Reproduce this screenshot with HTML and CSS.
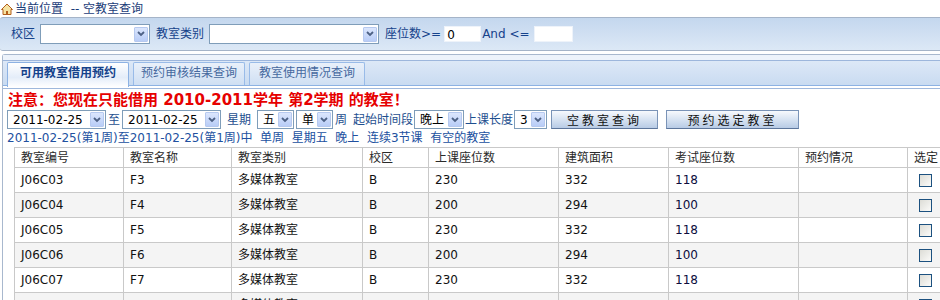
FILE: index.html
```html
<!DOCTYPE html>
<html lang="zh-CN">
<head>
    <meta charset="UTF-8">
    <title>空教室查询</title>
    <link rel="stylesheet" href="styles.css">
</head>
<body>
    <div class="crumb">
        <svg class="home" width="12" height="12" viewBox="0 0 12 12">
            <path d="M6 1 L11.5 6.5 L10 6.5 L10 11.5 L2 11.5 L2 6.5 L0.5 6.5 Z" fill="#f6e3a2" stroke="#b45f1c" stroke-width="1"/>
            <rect x="5" y="8" width="2" height="3.5" fill="#b45f1c"/>
        </svg>
        <span>当前位置&nbsp; -- 空教室查询</span>
    </div>

    <div class="search">
        <span class="lbl">校区</span>
        <span class="sel sel-campus"><span class="val"></span><span class="arr"><svg width="8" height="6" viewBox="0 0 8 6"><polyline points="1,1 4,4 7,1" fill="none" stroke="#4d6185" stroke-width="1.8"/></svg></span></span>
        <span class="lbl">教室类别</span>
        <span class="sel sel-type"><span class="val"></span><span class="arr"><svg width="8" height="6" viewBox="0 0 8 6"><polyline points="1,1 4,4 7,1" fill="none" stroke="#4d6185" stroke-width="1.8"/></svg></span></span>
        <span class="lbl">座位数&gt;=</span>
        <span class="txt txt-min">0</span>
        <span class="lbl lbl-and">And &lt;=</span>
        <span class="txt txt-max"></span>
    </div>

    <div class="tabpanel">
        <div class="tabhead">
            <div class="tabbar">
                <div class="tab tab-on">可用教室借用预约</div>
                <div class="tab">预约审核结果查询</div>
                <div class="tab tab-wide">教室使用情况查询</div>
            </div>
        </div>

        <div class="tabbody">
            <div class="warn">注意：您现在只能借用 2010-2011学年 第2学期 的教室！</div>

            <div class="ctrls">
                <span class="sel sel-date"><span class="val">2011-02-25</span><span class="arr"><svg width="8" height="6" viewBox="0 0 8 6"><polyline points="1,1 4,4 7,1" fill="none" stroke="#4d6185" stroke-width="1.8"/></svg></span></span>
                <span class="lbl">至</span>
                <span class="sel sel-date"><span class="val">2011-02-25</span><span class="arr"><svg width="8" height="6" viewBox="0 0 8 6"><polyline points="1,1 4,4 7,1" fill="none" stroke="#4d6185" stroke-width="1.8"/></svg></span></span>
                <span class="lbl wide">星期</span>
                <span class="sel sel-day wide"><span class="val">五</span><span class="arr"><svg width="8" height="6" viewBox="0 0 8 6"><polyline points="1,1 4,4 7,1" fill="none" stroke="#4d6185" stroke-width="1.8"/></svg></span></span>
                <span class="sel sel-day"><span class="val">单</span><span class="arr"><svg width="8" height="6" viewBox="0 0 8 6"><polyline points="1,1 4,4 7,1" fill="none" stroke="#4d6185" stroke-width="1.8"/></svg></span></span>
                <span class="lbl">周</span>
                <span class="lbl wide">起始时间段</span>
                <span class="sel sel-time tight"><span class="val">晚上</span><span class="arr"><svg width="8" height="6" viewBox="0 0 8 6"><polyline points="1,1 4,4 7,1" fill="none" stroke="#4d6185" stroke-width="1.8"/></svg></span></span>
                <span class="lbl tight">上课长度</span>
                <span class="sel sel-len tight"><span class="val">3</span><span class="arr"><svg width="8" height="6" viewBox="0 0 8 6"><polyline points="1,1 4,4 7,1" fill="none" stroke="#4d6185" stroke-width="1.8"/></svg></span></span>
                <button class="btn btn-query">空教室查询</button>
                <button class="btn btn-book">预约选定教室</button>
            </div>

            <div class="info">2011-02-25(第1周)至2011-02-25(第1周)中&nbsp; 单周&nbsp; 星期五&nbsp; 晚上&nbsp; 连续3节课&nbsp; 有空的教室</div>

            <table class="grid">
                <colgroup>
                    <col class="c1"><col class="c2"><col class="c3"><col class="c4"><col class="c5">
                    <col class="c6"><col class="c7"><col class="c8"><col class="c9">
                </colgroup>
                <tr class="head">
                    <td>教室编号</td><td>教室名称</td><td>教室类别</td><td>校区</td><td>上课座位数</td>
                    <td>建筑面积</td><td>考试座位数</td><td>预约情况</td><td>选定</td>
                </tr>
                <tr>
                    <td>J06C03</td><td>F3</td><td>多媒体教室</td><td>B</td><td>230</td>
                    <td>332</td><td class="num">118</td><td></td><td class="chk"><span class="box"></span></td>
                </tr>
                <tr class="alt">
                    <td>J06C04</td><td>F4</td><td>多媒体教室</td><td>B</td><td>200</td>
                    <td>294</td><td class="num">100</td><td></td><td class="chk"><span class="box"></span></td>
                </tr>
                <tr>
                    <td>J06C05</td><td>F5</td><td>多媒体教室</td><td>B</td><td>230</td>
                    <td>332</td><td class="num">118</td><td></td><td class="chk"><span class="box"></span></td>
                </tr>
                <tr class="alt">
                    <td>J06C06</td><td>F6</td><td>多媒体教室</td><td>B</td><td>200</td>
                    <td>294</td><td class="num">100</td><td></td><td class="chk"><span class="box"></span></td>
                </tr>
                <tr>
                    <td>J06C07</td><td>F7</td><td>多媒体教室</td><td>B</td><td>230</td>
                    <td>332</td><td class="num">118</td><td></td><td class="chk"><span class="box"></span></td>
                </tr>
                <tr class="alt">
                    <td>J06C08</td><td>F8</td><td>多媒体教室</td><td>B</td><td>200</td>
                    <td>294</td><td class="num">100</td><td></td><td class="chk"><span class="box"></span></td>
                </tr>
            </table>
        </div>
    </div>
</body>
</html>
```

FILE: styles.css
```css
html, body {
    margin: 0;
    overflow: hidden;
}
body {
    font-family: "DejaVu Sans", "Noto Sans CJK SC", sans-serif;
    font-size: 12px;
    line-height: 16px;
    color: #15428b;
    background: #fff;
}

/* breadcrumb */
.crumb {
    height: 17px;
    display: flex;
    align-items: center;
    gap: 2px;
    padding-left: 1px;
    color: #1a3c78;
    white-space: nowrap;
    overflow: hidden;
}
.home {
    flex: none;
}

/* search bar */
.search {
    height: 32px;
    display: flex;
    align-items: center;
    padding-left: 11px;
    border-top: 1px solid #a5b4c8;
    border-bottom: 1px solid #a5b4c8;
    border-radius: 3px 0 0 3px;
    background: linear-gradient(#c4d7ee, #dce8f6);
    margin-bottom: 3px;
}
.search .lbl {
    margin: 0 5px 0 6px;
}
.search .lbl:first-child {
    margin-left: 0;
}
.search .lbl-and {
    margin: 0 4px 0 1px;
}
.lbl {
    white-space: nowrap;
}

/* select boxes */
.sel {
    display: flex;
    align-items: center;
    justify-content: space-between;
    height: 19px;
    box-sizing: border-box;
    border: 1px solid #7f9db9;
    background: #fff;
    color: #000;
    padding: 0 1px 0 5px;
    flex: none;
}
.search .sel {
    height: 20px;
}
.sel .arr {
    width: 14px;
    height: 15px;
    box-sizing: border-box;
    border: 1px solid #b6c9ef;
    border-radius: 1px;
    background: linear-gradient(#dbe6fd, #b9cdf7);
    display: flex;
    align-items: center;
    justify-content: center;
}
.sel-campus { width: 110px; }
.sel-type { width: 170px; }
.sel-date { width: 99px; }
.sel-day { width: 37px; }
.sel-time { width: 50px; }
.sel-len { width: 33px; }

.txt {
    height: 16px;
    line-height: 16px;
    background: #fff;
    color: #000;
    padding-left: 2px;
    box-sizing: border-box;
    border: 1px solid #eef3fa;
}
.txt-min { width: 37px; margin-left: -2px; }
.txt-max { width: 39px; }

/* tabs */
.tabpanel {
    margin-left: 2px;
    border-top: 1px solid #a8b8ce;
    border-left: 1px solid #a8b8ce;
    border-radius: 3px 0 0 0;
}
.tabhead {
    padding-top: 5px;
    background: #edf3fb;
}
.tabbar {
    height: 24px;
    display: flex;
    gap: 4px;
    padding-left: 4px;
    border-top: 1px solid #9db6dc;
    border-bottom: 1px solid #8db2e3;
    background: linear-gradient(#dde8f7, #c9dbf1);
}
.tab {
    margin-top: 1px;
    height: 23px;
    width: 112px;
    box-sizing: border-box;
    border: 1px solid #99bbe8;
    border-bottom: none;
    border-radius: 2px 2px 0 0;
    background: linear-gradient(#e9f0fa, #cfdff3);
    color: #46699f;
    text-align: center;
    line-height: 21px;
}
.tab-wide {
    width: 116px;
}
.tab-on {
    width: 122px;
    height: 25px;
    margin-bottom: -2px;
    border-color: #8db2e3;
    background: linear-gradient(#ffffff, #e4edf9 60%, #ffffff);
    color: #15428b;
    font-weight: bold;
}

.tabbody {
    margin-top: 2px;
    border-top: 1px solid #9fb8dc;
    padding-left: 4px;
    background: #fff;
}
.warn {
    height: 21px;
    line-height: 22px;
    padding-left: 1px;
    font-size: 15px;
    font-weight: bold;
    color: #e60000;
    white-space: pre;
}

/* control row */
.ctrls {
    height: 19px;
    display: flex;
    align-items: center;
    gap: 2px;
    color: #1e4f8f;
}
.ctrls .wide {
    margin-left: 4px;
}
.ctrls .tight {
    margin-left: -1px;
}
.btn {
    height: 19px;
    padding: 0;
    border: 1px solid #7a93b7;
    border-bottom-color: #5d769c;
    background: linear-gradient(#f7f9fd, #dae5f3 45%, #b8cbe5);
    font-family: "Noto Sans CJK SC", sans-serif;
    font-size: 12px;
    line-height: 16px;
    letter-spacing: 3px;
    color: #111;
}
.btn-query {
    width: 107px;
    margin-left: 2px;
}
.btn-book {
    width: 133px;
    margin-left: 6px;
}

.info {
    margin-top: 1px;
    height: 16px;
    color: #2150a0;
    white-space: nowrap;
}

/* result grid */
.grid {
    margin: 1px 0 0 7px;
    width: 928px;
    table-layout: fixed;
    border-collapse: collapse;
    color: #111;
}
.grid td {
    border: 1px solid #c9c9c9;
    height: 24px;
    padding: 0 0 0 6px;
    white-space: nowrap;
    overflow: hidden;
}
.grid .head td {
    height: 19px;
    color: #2a2a2a;
    background: #fff;
}
.grid .alt td {
    background: #f4f4f4;
}
.grid .num {
    color: #0c0c3c;
}
.grid .chk {
    padding: 0;
    text-align: center;
}
.box {
    display: inline-block;
    width: 13px;
    height: 13px;
    box-sizing: border-box;
    border: 1px solid #1c5180;
    background: linear-gradient(135deg, #dcdcd6, #fbfbf9);
    vertical-align: middle;
}
.c1 { width: 109px; }
.c2 { width: 108px; }
.c3 { width: 131px; }
.c4 { width: 66px; }
.c5 { width: 130px; }
.c6 { width: 110px; }
.c7 { width: 130px; }
.c8 { width: 109px; }
.c9 { width: 35px; }
```
